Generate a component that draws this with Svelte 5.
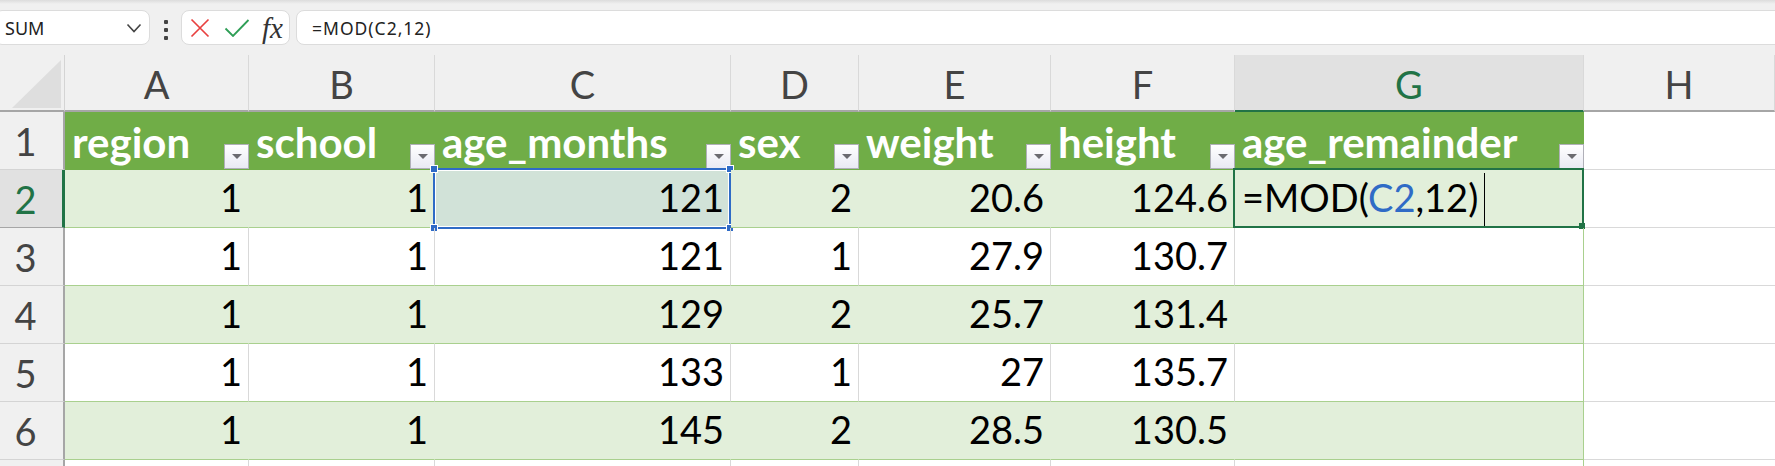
<script>
  const columns = ['A', 'B', 'C', 'D', 'E', 'F', 'G', 'H'];
  const headers = ['region', 'school', 'age_months', 'sex', 'weight', 'height', 'age_remainder'];
  const rows = [
    [1, 1, 121, 2, '20.6', '124.6'],
    [1, 1, 121, 1, '27.9', '130.7'],
    [1, 1, 129, 2, '25.7', '131.4'],
    [1, 1, 133, 1, '27', '135.7'],
    [1, 1, 145, 2, '28.5', '130.5'],
    ['', '', '', '', '', ''],
  ];
</script>

<div class="sheet">
  <div class="formula-bar">
    <div class="name-box">
      <span>SUM</span>
      <svg width="16" height="10" viewBox="0 0 16 10"><path d="M1.5 1.5 8 8.5l6.500-7" fill="none" stroke="#444" stroke-width="1.6" /></svg>
    </div>
    <div class="dots"><i></i><i></i><i></i></div>
    <div class="actions">
      <svg width="20" height="20" viewBox="0 0 20 20"><path d="M1.500 1.500 18.500 18.500M18.500 1.500 1.500 18.500" stroke="#e8403f" stroke-width="1.700" fill="none" /></svg>
      <svg width="26" height="18" viewBox="0 0 26 18"><path d="M1.500 9.500 9 17 24.500 1" stroke="#2e9e56" stroke-width="1.800" fill="none" /></svg>
      <span class="fx">fx</span>
    </div>
    <div class="formula-input">=MOD(C2,12)</div>
  </div>

  <div class="grid">
    <div class="corner"><div class="triangle"></div></div>
    {#each columns as col}
      <div class="col-head" class:active={col === 'G'}>{col}</div>
    {/each}

    <div class="row-head">1</div>
    {#each headers as title}
      <div class="title-cell">
        <span>{title}</span>
        <div class="filter-btn"><b></b></div>
      </div>
    {/each}
    <div class="empty"></div>

    {#each rows as row, r}
      <div class="row-head" class:active={r === 0}>{r < 5 ? r + 2 : ''}</div>
      {#each row as value, c}
        <div class="cell" class:band={r % 2 === 0} class:ref={r === 0 && c === 2}>
          {value}
          {#if r === 0 && c === 2}
            <div class="ref-frame">
              <i class="tl"></i><i class="tr"></i><i class="bl"></i><i class="br"></i>
            </div>
          {/if}
        </div>
      {/each}
      <div class="cell wide" class:band={r % 2 === 0} class:edit={r === 0}>
        {#if r === 0}
          <span>=MOD(<span class="ref-text">C2</span>,12)</span><span class="caret"></span>
          <div class="edit-frame"><i></i></div>
        {/if}
      </div>
      <div class="empty"></div>
    {/each}
  </div>
</div>

<style>
  :global(body) {
    margin: 0;
    background: #fff;
  }

  .sheet {
    width: 1775px;
    height: 466px;
    overflow: hidden;
    background: #f0f0f0;
  }

  .formula-bar {
    height: 55px;
    box-sizing: border-box;
    padding-top: 10px;
    display: flex;
    align-items: flex-start;
    background: linear-gradient(#dcdcdc 0, #f0f0f0 4px);
    font-family: "Noto Sans", sans-serif;
    color: #222;
  }

  .name-box,
  .actions,
  .formula-input {
    height: 35px;
    box-sizing: border-box;
    background: #fff;
    border: 1px solid #dcdcdc;
    border-radius: 8px;
    display: flex;
    align-items: center;
  }

  .name-box {
    width: 156px;
    margin-left: -6px;
    padding: 0 7px 0 10px;
    justify-content: space-between;
    font-size: 18px;
  }

  .dots {
    width: 31px;
    display: flex;
    flex-direction: column;
    align-items: center;
    gap: 4px;
    padding-top: 10px;
  }

  .dots i {
    width: 4px;
    height: 4px;
    background: #444;
    border-radius: 1px;
  }

  .actions {
    width: 109px;
    padding-left: 8px;
    gap: 14px;
  }

  .fx {
    font-family: "Liberation Serif", serif;
    font-style: italic;
    font-size: 29px;
    line-height: 30px;
    color: #333;
    margin-left: -2px;
  }

  .formula-input {
    margin-left: 6px;
    flex: 1;
    margin-right: -10px;
    padding-left: 15px;
    font-size: 17.5px;
    letter-spacing: 1px;
  }

  .grid {
    display: grid;
    grid-template-columns: 65px 184px 186px 296px 128px 192px 184px 349px 1fr;
    grid-template-rows: 57px;
    grid-auto-rows: 58px;
    font-family: Lato, sans-serif;
    font-size: 38px;
    background: #fff;
  }

  .corner {
    background: #f0f0f0;
    border-right: 1px solid #d4d4d4;
    border-bottom: 2px solid #a6a6a6;
    padding: 5px 3px 2px 12px;
    box-sizing: border-box;
  }

  .triangle {
    height: 48px;
    background: #dedede;
    clip-path: polygon(100% 0, 100% 100%, 0 100%);
  }

  .col-head {
    background: #f0f0f0;
    color: #444;
    display: flex;
    align-items: center;
    justify-content: center;
    box-sizing: border-box;
    padding-top: 2px;
    border-right: 1px solid #d9d9d9;
    border-bottom: 2px solid #a6a6a6;
    margin-top: 0;
  }

  .col-head.active {
    background: #e1e1e1;
    color: #217346;
    border-bottom-color: #217346;
  }

  .row-head {
    background: #f0f0f0;
    color: #444;
    display: flex;
    align-items: center;
    justify-content: center;
    box-sizing: border-box;
    border-right: 2px solid #a6a6a6;
    border-bottom: 1px solid #d4d4d4;
    padding-right: 12px;
  }

  .row-head.active {
    background: #e1e1e1;
    color: #217346;
    border-right: 3px solid #217346;
    border-bottom-color: #a6a6a6;
    padding-right: 11px;
  }

  .title-cell {
    position: relative;
    background: #70ad47;
    color: #fff;
    font-weight: 700;
    font-size: 42px;
    box-sizing: border-box;
    padding: 0 0 0 7px;
    line-height: 61px;
    white-space: nowrap;
  }

  .filter-btn {
    position: absolute;
    right: 0;
    bottom: 1px;
    width: 25px;
    height: 25px;
    box-sizing: border-box;
    border: 1px solid #b0b0b8;
    background: linear-gradient(#fff, #e9eaf3);
    display: flex;
    align-items: center;
    justify-content: center;
  }

  .filter-btn b {
    width: 0;
    height: 0;
    border-left: 5px solid transparent;
    border-right: 5px solid transparent;
    border-top: 5px solid #6b6b70;
  }

  .cell {
    position: relative;
    box-sizing: border-box;
    color: #000;
    text-align: right;
    padding: 0 6px 0 0;
    line-height: 55px;
    border-right: 1px solid #d9d9d9;
    border-bottom: 1px solid #a9d08e;
    white-space: nowrap;
  }

  .cell.band {
    background: #e2efda;
    border-right-color: #e2efda;
  }

  .cell.wide {
    text-align: left;
    padding: 0 0 0 7px;
    border-right-color: #a9d08e;
  }

  .cell.ref {
    background: #d1e2d8;
  }

  .ref-frame {
    position: absolute;
    inset: -2px -1px -2px -2px;
    border: 2px solid #2f6bc6;
    outline: 1px solid #fff;
    outline-offset: -3px;
  }

  .ref-frame i {
    position: absolute;
    width: 6px;
    height: 6px;
    background: #2f6bc6;
    border: 1px solid #fff;
  }

  .ref-frame .tl { left: -5px; top: -5px; }
  .ref-frame .tr { right: -5px; top: -5px; }
  .ref-frame .bl { left: -5px; bottom: -5px; }
  .ref-frame .br { right: -5px; bottom: -5px; }

  .ref-text {
    color: #2f6bc6;
  }

  .caret {
    position: absolute;
    left: 249px;
    top: 3px;
    width: 1px;
    height: 53px;
    background: #000;
  }

  .edit-frame {
    position: absolute;
    inset: -2px -1px -1px -2px;
    border: 2px solid #217346;
  }

  .edit-frame i {
    position: absolute;
    right: -3px;
    bottom: -3px;
    width: 6px;
    height: 6px;
    background: #217346;
  }

  .empty {
    background: #fff;
    border-bottom: 1px solid #d9d9d9;
  }
</style>
